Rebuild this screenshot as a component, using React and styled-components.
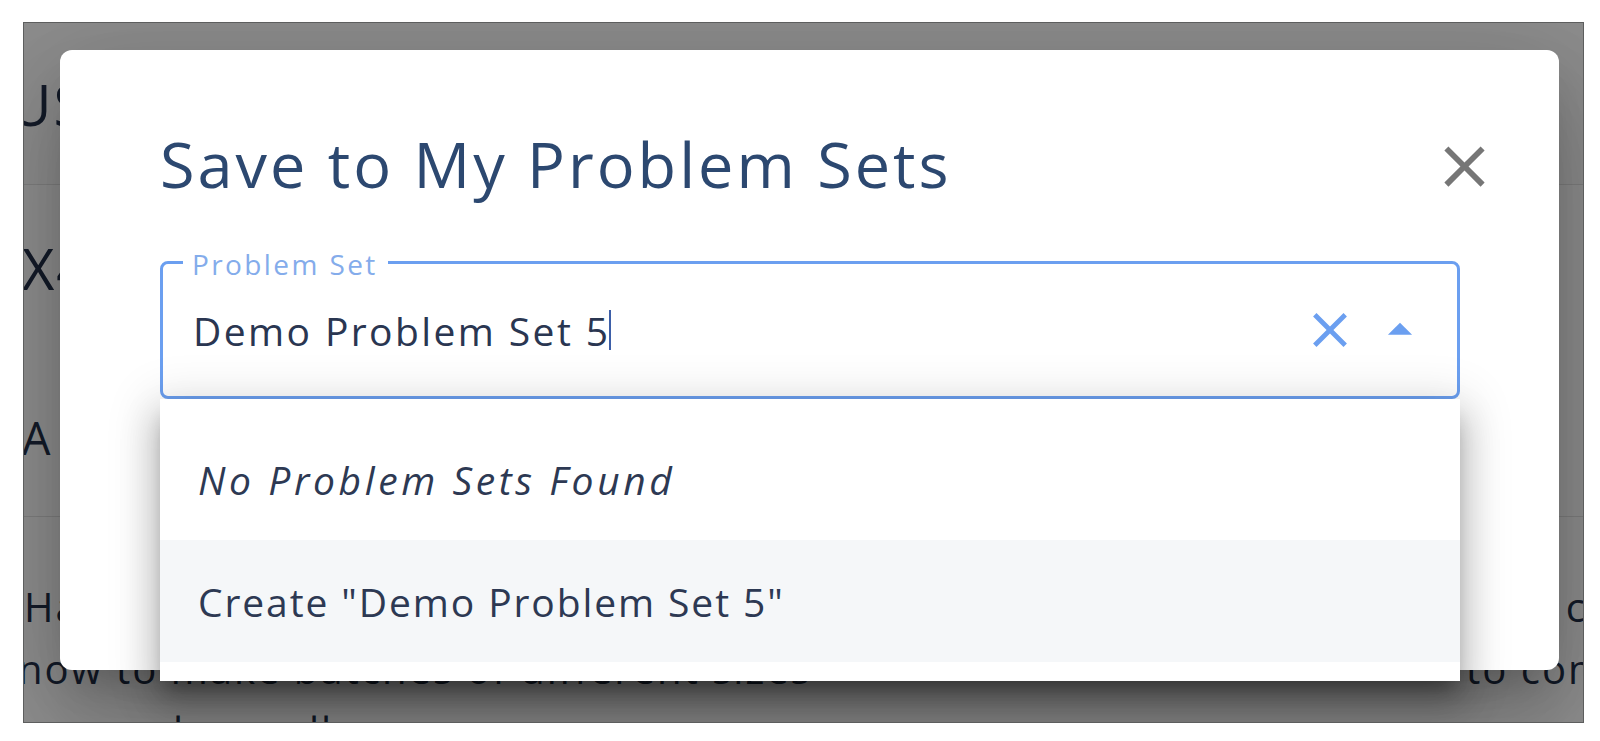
import React from 'react'
import styled, { createGlobalStyle } from 'styled-components'

const GlobalStyle = createGlobalStyle`
  html, body {
    margin: 0;
    padding: 0;
    background: #fff;
  }
  body {
    font-family: "Open Sans", "Liberation Sans", sans-serif;
  }
`;

const Shell = styled.div`
  padding: 22px 0 0 23px;
`;

const Frame = styled.div`
  position: relative;
  width: 1559px;
  height: 699px;
  border: 1px solid #5d5e5e;
  overflow: hidden;
  background: #fff;
`;

/* page behind the dialog */
const Page = styled.div`
  display: flex;
  flex-direction: column;
  color: #243049;
  letter-spacing: 2px;
`;

const PageHeader = styled.div`
  height: 161px;
  display: flex;
  align-items: center;
  background: #fbfbfb;
  border-bottom: 1px solid #e2e2e2;
  font-size: 57px;
  white-space: nowrap;
  margin-left: -14px;
`;

const PageSection = styled.div`
  height: 332px;
  display: flex;
  flex-direction: column;
  padding-top: 50px;
  box-sizing: border-box;
  border-bottom: 1px solid #e2e2e2;
  white-space: nowrap;
`;

const BigLine = styled.div`
  font-size: ${p => p.size}px;
  line-height: 1.2;
  margin-top: ${p => p.gap || 0}px;
  margin-left: -2px;
`;

const Paragraph = styled.div`
  padding-top: 59px;
  font-size: 40px;
  line-height: 62px;
`;

const TextLine = styled.div`
  display: flex;
  justify-content: space-between;
  white-space: pre;
  margin-left: ${p => p.shift || 0}px;
  margin-right: ${p => p.cut || 0}px;
`;

const Backdrop = styled.div`
  position: absolute;
  inset: 0;
  background: rgba(0, 0, 0, 0.44);
`;

/* dialog */
const Dialog = styled.div`
  position: absolute;
  left: 36px;
  top: 27px;
  width: 1499px;
  height: 620px;
  box-sizing: border-box;
  padding: 76px 99px 0 100px;
  background: #fff;
  border-radius: 12px;
  box-shadow: 0 26px 36px -16px rgba(0, 0, 0, 0.2),
    0 58px 90px 8px rgba(0, 0, 0, 0.14),
    0 22px 110px 20px rgba(0, 0, 0, 0.12);
`;

const TitleRow = styled.div`
  display: flex;
  align-items: center;
  justify-content: space-between;
`;

const Title = styled.h2`
  margin: 0;
  font-size: 63px;
  line-height: 76px;
  font-weight: 400;
  letter-spacing: 3px;
  color: #2c4870;
`;

const CloseButton = styled.button`
  display: flex;
  padding: 0;
  border: none;
  background: none;
  margin-right: -39px;
  margin-top: 4px;
  color: #767676;
`;

const Field = styled.div`
  position: relative;
  margin-top: 59px;
  height: 138px;
  box-sizing: border-box;
  border: 3px solid #6b9ff0;
  border-radius: 8px;
  display: flex;
  align-items: center;
  padding: 0 28px 0 30px;
`;

const FieldLabel = styled.span`
  position: absolute;
  left: 20px;
  top: -17px;
  padding: 0 10px 0 9px;
  background: #fff;
  font-size: 28px;
  line-height: 34px;
  letter-spacing: 2.4px;
  color: #84aceb;
`;

const InputText = styled.div`
  flex: 1;
  display: flex;
  align-items: center;
  font-size: 39px;
  letter-spacing: 2.4px;
  color: #2a3651;
  white-space: nowrap;
`;

const Caret = styled.span`
  display: inline-block;
  width: 2px;
  height: 40px;
  margin-left: -1px;
  background: #3d5fa8;
`;

const Adornments = styled.div`
  display: flex;
  align-items: center;
  gap: 12px;
  color: #6b9ff0;
`;

const Listbox = styled.div`
  position: absolute;
  left: -3px;
  right: -3px;
  top: calc(100% + 3px);
  padding: 19px 0;
  background: #fff;
  box-shadow: 0 14px 18px -8px rgba(0, 0, 0, 0.3),
    0 22px 34px 4px rgba(0, 0, 0, 0.18),
    0 8px 44px 10px rgba(0, 0, 0, 0.12);
  z-index: 2;
`;

const Option = styled.div`
  height: 122px;
  display: flex;
  align-items: center;
  padding-left: 38px;
  font-size: 39px;
  color: #2d3953;
  font-style: ${p => (p.muted ? 'italic' : 'normal')};
  letter-spacing: ${p => (p.muted ? 3.6 : 1.9)}px;
  background: ${p => (p.active ? '#f5f7f9' : '#fff')};
`;

const CloseIcon = ({ size }) => (
  <svg width={size} height={size} viewBox="0 0 24 24" fill="currentColor">
    <path d="M19 6.41 17.59 5 12 10.59 6.41 5 5 6.41 10.59 12 5 17.59 6.41 19 12 13.41 17.59 19 19 17.59 13.41 12z" />
  </svg>
);

const ArrowUpIcon = ({ size }) => (
  <svg width={size} height={size} viewBox="0 0 24 24" fill="currentColor">
    <path d="m7 14 5-5 5 5z" />
  </svg>
);

export default function App() {
  return (
    <Shell>
      <GlobalStyle />
      <Frame>
        <Page>
          <PageHeader>US Customary Units</PageHeader>
          <PageSection>
            <BigLine size={56}>X4 Batch Size</BigLine>
            <BigLine size={45} gap={109}>A</BigLine>
          </PageSection>
          <Paragraph>
            <TextLine cut={-30}>
              <span>Have a look at the recipe below and use it</span>
              <span>co</span>
            </TextLine>
            <TextLine shift={-6} cut={-24}>
              <span>now to make batches of different sizes</span>
              <span>to com</span>
            </TextLine>
            <TextLine shift={149}>
              <span>{'l          ll'}</span>
            </TextLine>
          </Paragraph>
        </Page>
        <Backdrop />
        <Dialog>
          <TitleRow>
            <Title>Save to My Problem Sets</Title>
            <CloseButton>
              <CloseIcon size={69} />
            </CloseButton>
          </TitleRow>
          <Field>
            <FieldLabel>Problem Set</FieldLabel>
            <InputText>
              Demo Problem Set 5
              <Caret />
            </InputText>
            <Adornments>
              <CloseIcon size={58} />
              <ArrowUpIcon size={58} />
            </Adornments>
            <Listbox>
              <Option muted>No Problem Sets Found</Option>
              <Option active>Create "Demo Problem Set 5"</Option>
            </Listbox>
          </Field>
        </Dialog>
      </Frame>
    </Shell>
  )
}
